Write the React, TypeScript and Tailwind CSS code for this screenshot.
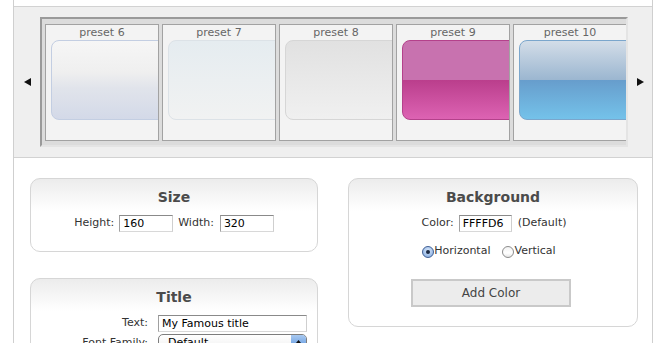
import React from 'react';

const presets = [
  { label: 'preset 6', box: 'border-[#c3cee2] bg-[linear-gradient(to_bottom,#f6f6f6,#efefef_40%,#e1e4eb_60%,#d3d9e8)]' },
  { label: 'preset 7', box: 'border-[#dce2e7] bg-[linear-gradient(to_bottom,#e5ecf0,#f1f2f2)]' },
  { label: 'preset 8', box: 'border-[#d6d6d6] bg-[linear-gradient(to_bottom,#e1e1e1,#f0f0f0)]' },
  { label: 'preset 9', box: 'border-[#b4418b] bg-[linear-gradient(to_bottom,#c872af_50%,#ba3e8c_50%,#dd63b3)]' },
  { label: 'preset 10', box: 'border-[#7ba6cc] bg-[linear-gradient(to_bottom,#d3dde8,#9bb6d0_50%,#679dcc_50%,#74c2ea)]' },
];

function Arrow({ dir }: { dir: 'left' | 'right' }) {
  return (
    <svg width="7" height="8" viewBox="0 0 7 8">
      {dir === 'left' ? <polygon points="7,0 7,8 0,4" fill="#111" /> : <polygon points="0,0 0,8 7,4" fill="#111" />}
    </svg>
  );
}

function Input({ value, className }: { value: string; className: string }) {
  return (
    <div
      className={
        'h-[17px] border border-t-[#8a8a8a] border-l-[#a0a0a0] border-r-[#cfcfcf] border-b-[#d8d8d8] bg-white pl-[3px] text-[11px] leading-[15px] text-black ' +
        className
      }
    >
      {value}
    </div>
  );
}

function Radio({ checked }: { checked?: boolean }) {
  return checked ? (
    <span className="flex h-[12px] w-[12px] items-center justify-center rounded-full border border-[#3f5f94] bg-[radial-gradient(circle_at_50%_35%,#d6e6fa,#7fa7de)]">
      <span className="h-[4px] w-[4px] rounded-full bg-[#1b2a44]" />
    </span>
  ) : (
    <span className="h-[12px] w-[12px] rounded-full border border-[#8c8c8c] bg-[linear-gradient(to_bottom,#f2f2f2,#ffffff_60%,#e6e6e6)]" />
  );
}

function Panel({ title, children, className = '' }: { title: string; children: React.ReactNode; className?: string }) {
  return (
    <div className={'rounded-[10px] border border-[#d6d6d6] bg-[linear-gradient(to_bottom,#ececec,#ffffff_32px)] ' + className}>
      <div className="pt-[9px] text-center text-[14px] font-bold leading-[18px] text-[#4b4b4b]">{title}</div>
      {children}
    </div>
  );
}

export default function App() {
  return (
    <div className="h-[343px] w-[661px] overflow-hidden bg-white font-['DejaVu_Sans',sans-serif] text-[#333]">
      <div className="ml-[13px] h-full w-[640px] border-x border-[#cfcfcf] pt-[6px]">
        {/* Preset carousel */}
        <div className="flex items-center border-y border-[#d2d2d2] bg-[#efefef] py-[10px]">
          <div className="flex w-[26px] justify-center pl-[1px]">
            <Arrow dir="left" />
          </div>
          <div className="flex h-[130px] w-[588px] gap-[3px] overflow-hidden border-2 border-t-[#9a9a9a] border-l-[#9a9a9a] border-r-[#e4e4e4] border-b-[#e4e4e4] bg-[#dcdcdc] pt-[5px] pl-[3px]">
            {presets.map((p) => (
              <div key={p.label} className="h-[117px] w-[114px] shrink-0 overflow-hidden border border-[#a2a2a2] bg-[#f3f3f3]">
                <div className="h-[15px] text-center text-[11px] leading-[15px] text-[#666]">{p.label}</div>
                <div className={'ml-[5px] h-[80px] w-[150px] rounded-[8px] border ' + p.box} />
              </div>
            ))}
          </div>
          <div className="flex flex-1 pl-[9px]">
            <Arrow dir="right" />
          </div>
        </div>

        {/* Settings */}
        <div className="flex gap-[30px] pl-[16px] pt-[20px] text-[11px]">
          <div className="flex w-[288px] flex-col gap-[26px]">
            <Panel title="Size" className="h-[74px]">
              <div className="mt-[9px] flex items-center justify-center">
                <span>Height:</span>
                <Input value="160" className="ml-[5px] w-[54px]" />
                <span className="ml-[5px]">Width:</span>
                <Input value="320" className="ml-[6px] w-[54px]" />
              </div>
            </Panel>
            <Panel title="Title" className="h-[160px]">
              <div className="mt-[9px] grid grid-cols-[117px_149px] items-center gap-x-[10px] gap-y-[2px]">
                <span className="text-right">Text:</span>
                <Input value="My Famous title" className="w-[149px]" />
                <span className="text-right">Font Family:</span>
                <div className="flex h-[18px] w-[149px] items-center overflow-hidden rounded-[5px] border border-[#7d7d7d] bg-[linear-gradient(to_bottom,#ffffff,#eeeeee)]">
                  <span className="flex-1 pl-[9px] leading-[16px] text-black">Default</span>
                  <span className="flex h-full w-[15px] flex-col items-center justify-center gap-[1px] bg-[linear-gradient(to_bottom,#a9c9f0,#4f8ddc)]">
                    <svg width="5" height="3" viewBox="0 0 5 3"><polygon points="2.5,0 5,3 0,3" fill="#111" /></svg>
                    <svg width="5" height="3" viewBox="0 0 5 3"><polygon points="0,0 5,0 2.5,3" fill="#111" /></svg>
                  </span>
                </div>
              </div>
            </Panel>
          </div>

          <div className="w-[290px]">
            <Panel title="Background" className="h-[149px]">
              <div className="mt-[9px] flex items-center justify-center pl-[2px]">
                <span>Color:</span>
                <Input value="FFFFD6" className="ml-[5px] w-[53px]" />
                <span className="ml-[6px]">(Default)</span>
              </div>
              <div className="mt-[11px] flex h-[17px] items-center justify-center pr-[8px]">
                <Radio checked />
                <span>Horizontal</span>
                <span className="ml-[12px]" />
                <Radio />
                <span>Vertical</span>
              </div>
              <div className="mt-[19px] flex justify-center pr-[4px]">
                <div className="flex h-[28px] w-[160px] items-center justify-center border-2 border-[#c9c9c9] bg-[#ececec] text-[12px] text-[#444]">
                  Add Color
                </div>
              </div>
            </Panel>
          </div>
        </div>
      </div>
    </div>
  );
}
